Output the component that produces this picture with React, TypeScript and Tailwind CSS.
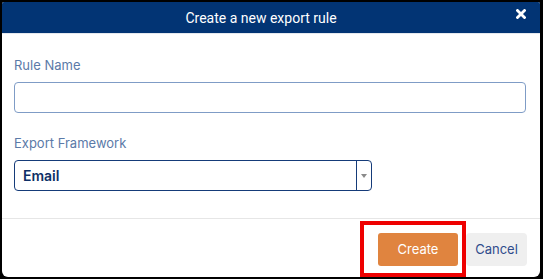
export default function App() {
  return (
    <div className="h-[279px] w-[543px] bg-black pl-[2px] pt-[2px]">
      <div
        className="flex h-[275px] w-[538px] flex-col overflow-hidden rounded-b-[6px] rounded-t-[2px] bg-white"
        style={{ fontFamily: "Inter, 'Liberation Sans', sans-serif" }}
      >
        {/* header */}
        <div className="relative flex h-[32px] shrink-0 items-center border-b border-[#e4e8ee] bg-[#023474]">
          <h1
            className="w-full pr-[20px] text-center text-[14px] leading-none text-white"
            style={{ fontFamily: "Roboto, 'Liberation Sans', sans-serif" }}
          >
            Create a new export rule
          </h1>
          <button className="absolute right-[14px] top-[7px] flex h-[10px] w-[10px] items-center justify-center">
            <svg viewBox="0 0 10 10" className="h-[10px] w-[10px]">
              <path d="M1.5 1.5 L8.5 8.5 M8.5 1.5 L1.5 8.5" stroke="white" strokeWidth="2.8" strokeLinecap="square" />
            </svg>
          </button>
        </div>

        {/* body */}
        <div className="flex flex-col px-[12px] pt-[22px]">
          <label className="text-[13px] leading-[18px] text-[#5b7aa8]">Rule Name</label>
          <input
            type="text"
            className="mt-[8px] h-[31px] w-[512px] rounded-[4px] border border-[#7f9cc6] bg-white px-2 text-[14px] outline-none"
          />
          <label className="mt-[21px] text-[13px] leading-[18px] text-[#5b7aa8]">Export Framework</label>
          <div className="mt-[8px] flex h-[31px] w-[358px] items-stretch rounded-[4px] border border-[#153b79]">
            <div className="flex flex-1 items-center px-[8px] text-[14px] font-semibold text-[#0e2f66]">Email</div>
            <div className="flex w-[15px] items-center justify-center border-l border-[#153b79]">
              <svg viewBox="0 0 6 4" className="h-[4px] w-[6px]">
                <path d="M0 0 L6 0 L3 4 Z" fill="#8a8a8a" />
              </svg>
            </div>
          </div>
        </div>

        {/* footer */}
        <div className="mt-[27px] flex justify-end gap-[8px] border-t border-[#e6e6e6] pr-[13px] pt-[14px]">
          <div className="relative">
            <button className="h-[33px] w-[80px] rounded-[3px] bg-[#e0843f] text-[13px] text-white">Create</button>
            <div className="pointer-events-none absolute -bottom-[11px] -left-[18px] -right-[8px] -top-[12px] border-[4px] border-[#ee0000]" />
          </div>
          <button className="h-[33px] w-[61px] rounded-[4px] bg-[#efefef] text-[13px] text-[#2f4c8c]">Cancel</button>
        </div>
      </div>
    </div>
  );
}
